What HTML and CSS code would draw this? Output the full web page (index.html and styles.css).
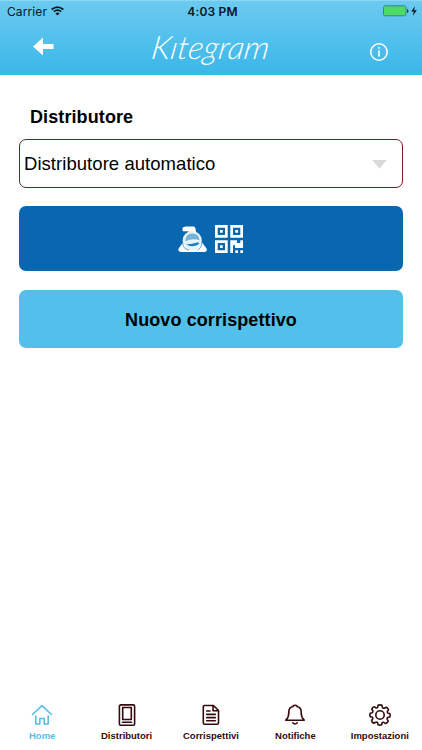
FILE: index.html
```html
<!DOCTYPE html>
<html lang="it">
<head>
    <meta charset="UTF-8">
    <meta name="viewport" content="width=device-width, initial-scale=1.0">
    <title>Kitegram</title>
    <link rel="stylesheet" href="styles.css">
</head>
<body>

    <header class="header">
        <div class="status-bar">
            <div class="carrier">
                <span>Carrier</span>
                <svg width="13" height="10" viewBox="0 0 13 10" fill="none" stroke="#06171f" stroke-width="1.7">
                    <path d="M.7 3.5Q6.5-1.3 12.3 3.5M2.8 5.7Q6.5 2.6 10.2 5.7"/>
                    <path d="M4.4 7.2Q6.5 5.6 8.6 7.2L6.5 9.5Z" fill="#06171f" stroke="none"/>
                </svg>
            </div>
            <div class="time">4:03 PM</div>
            <div class="battery">
                <svg width="36" height="12" viewBox="0 0 36 12">
                    <rect x="1.5" y=".8" width="22.5" height="10" rx="1.5" fill="#4cd964" stroke="#35878e"/>
                    <path d="M25 4q1.5.2 1.5 2t-1.5 2Z" fill="#17404f"/>
                    <path d="M32.9 1.2L29.2 6.6h2.6L30.9 10.8 34.8 5.3h-2.6Z" fill="#06171f"/>
                </svg>
            </div>
        </div>
        <div class="nav-bar">
            <svg class="back" width="21" height="19" viewBox="0 0 21 19">
                <path d="M0 9.5L10 .5V7H20.5V12H10V18.5Z" fill="#fff"/>
            </svg>
            <div class="logo">Kıtegram</div>
            <svg class="info" width="20" height="20" viewBox="0 0 20 20" fill="none" stroke="#fff">
                <circle cx="10" cy="10" r="8.2" stroke-width="1.5"/>
                <path d="M10 8.2V14.4M10 5V6.7" stroke-width="1.6"/>
            </svg>
        </div>
    </header>

    <main class="content">
        <div class="label">Distributore</div>
        <div class="select">
            <span>Distributore automatico</span>
            <svg width="15" height="9" viewBox="0 0 15 9"><path d="M.3 0H14.7L7.5 8.8Z" fill="#d9d9d9"/></svg>
        </div>
        <div class="btn btn-scan">
            <svg width="30" height="28" viewBox="0 0 30 28">
                <path d="M4.5 3Q5 1.5 8 1.5H15.5Q17 1.5 17.3 3L18.5 9H10L10.5 6.3H5Q4 6 4.5 3Z" fill="#fff"/>
                <path d="M5 17.5L.6 23.5Q-.5 27 4 27H25Q30 27 28.5 23.5L24 17.5Z" fill="#fff"/>
                <circle cx="14.2" cy="15.6" r="9.6" fill="#e4f2fa"/>
                <path d="M7.3 16.3Q7.6 8.7 14.2 8.5T21.6 15.3Q14.6 13 7.3 16.3Z" fill="#74b3dc"/>
                <path d="M8.2 19.5Q14.3 23.2 21.2 19L20.2 17.3Q14 19.2 8.2 19.5Z" fill="#227bbe"/>
                <path d="M4.8 18Q4.3 23.3 11 25.2M23.8 18Q24 22.6 19.5 25" fill="none" stroke="#4c98ce" stroke-width=".9"/>
            </svg>
            <svg class="qr" width="28" height="28" viewBox="0 0 28 28" fill="#fff">
                <path fill-rule="evenodd" d="M0 0H12.7V12.7H0ZM2.7 2.7V10H10V2.7ZM15.3 0H28V12.7H15.3ZM18 2.7V10H25.3V2.7ZM0 15.3H12.7V28H0ZM2.7 18V25.3H10V18Z"/>
                <path d="M5 5h2.7v2.7H5ZM20.3 5H23v2.7h-2.7ZM5 20.3h2.7V23H5ZM15.3 15.3H22V18h3.3v-2.7H28V23h-8v-2.7h-2V28h-2.7ZM20.3 25.3H23V28h-2.7ZM25.3 25.3H28V28h-2.7Z"/>
            </svg>
        </div>
        <div class="btn btn-new">Nuovo corrispettivo</div>
    </main>

    <nav class="tabs">
        <div class="tab active">
            <svg width="22" height="22" viewBox="0 0 22 22">
                <path d="M1.5 10.5L11 1.7L20.5 10.5M4.8 12V20H8.8V14.5H13.2V20H17.2V12"/>
            </svg>
            <span>Home</span>
        </div>
        <div class="tab">
            <svg width="22" height="22" viewBox="0 0 22 22">
                <rect x="3.4" y=".9" width="15.2" height="20.3" rx="1.3"/>
                <rect x="6.7" y="3.5" width="8.6" height="12"/>
                <path d="M6.5 18.3H15.5"/>
            </svg>
            <span>Distributori</span>
        </div>
        <div class="tab">
            <svg width="22" height="22" viewBox="0 0 22 22">
                <path d="M4.3 1.5H13.5L18.5 6.5V19Q18.5 20.3 17.3 20.3H4.3Q3.3 20.3 3.3 19V2.7Q3.3 1.5 4.3 1.5ZM13 1.8V6.8H18M6.7 7H10M6.7 10.4H15.3M6.7 13.6H15.3M6.7 16.8H15.3"/>
            </svg>
            <span>Corrispettivi</span>
        </div>
        <div class="tab">
            <svg width="22" height="22" viewBox="0 0 22 22">
                <path d="M1.8 16.2Q4.8 13.5 4.8 9V7.4Q5.1 3.3 9 2.5Q9 1.2 11 1.2T13 2.5Q16.9 3.3 17.2 7.4V9Q17.2 13.5 20.2 16.2ZM8.7 18.8Q11 21.2 13.3 18.8"/>
            </svg>
            <span>Notifiche</span>
        </div>
        <div class="tab">
            <svg width="22" height="22" viewBox="0 0 22 22">
                <path d="M9 1.3Q11 .4 13 1.3Q13 4.5 15.3 4.3L17.3 3.2Q19.3 4.2 19.5 6Q17.2 8.2 19.2 9.3L20.8 9.5Q21.5 11 20.8 13Q17.6 13 18.2 15.3L19.2 17.2Q18.3 19.2 16.2 19.5Q14 17.2 13 19L12.7 20.8Q11 21.5 9 20.8Q9 17.6 6.7 18.2L4.8 19.2Q2.8 18.3 2.6 16.3Q4.8 14 3 13L1.2 12.8Q.5 11 1.2 9.3Q4.4 9 3.8 6.8L2.8 5Q3.5 3 5.6 2.8Q8 5 8.8 3Z"/>
                <circle cx="11" cy="11" r="4.2"/>
            </svg>
            <span>Impostazioni</span>
        </div>
    </nav>

</body>
</html>
```
FILE: styles.css
```css
body {
    margin: 0;
    height: 750px;
    display: flex;
    flex-direction: column;
    background: #fff;
    color: #000;
    font-family: "Liberation Sans", Arial, sans-serif;
    overflow: hidden;
}
svg {
    display: block;
    flex: none;
}
.header {
    height: 75px;
    background: linear-gradient(#6bcaf0, #3ab7e8);
    border-top: 1px solid #8bd6f3;
    box-sizing: border-box;
}
.status-bar {
    display: grid;
    grid-template-columns: 1fr auto 1fr;
    align-items: center;
    height: 20px;
    padding: 0 4px 0 7px;
    font-family: Inter, sans-serif;
    font-size: 12px;
    color: #06171f;
}
.carrier {
    display: flex;
    align-items: center;
    gap: 4px;
    letter-spacing: 0.1px;
}
.time {
    font-weight: 600;
    letter-spacing: 0.2px;
}
.battery {
    justify-self: end;
}
.nav-bar {
    display: grid;
    grid-template-columns: 1fr auto 1fr;
    height: 54px;
    padding: 0 33px;
}
.back {
    margin-top: 16px;
}
.logo {
    font-family: "Lato Light", Lato, sans-serif;
    font-weight: 300;
    font-style: italic;
    font-size: 32px;
    line-height: 52px;
    letter-spacing: 0.2px;
    color: #fff;
    transform: skewX(-9deg);
}
.info {
    justify-self: end;
    margin-top: 21px;
}
.content {
    flex: 1;
    padding: 31px 19px 0;
}
.label {
    padding-left: 11px;
    font-size: 18px;
    font-weight: bold;
    line-height: 22px;
    letter-spacing: 0.1px;
}
.select {
    display: flex;
    align-items: center;
    justify-content: space-between;
    box-sizing: border-box;
    height: 49px;
    margin-top: 11px;
    padding: 1px 15px 0 4px;
    border: 1px solid #702027;
    border-radius: 7px;
    font-size: 18.5px;
    letter-spacing: 0.05px;
}
.btn {
    display: flex;
    align-items: center;
    justify-content: center;
    border-radius: 7px;
    font-size: 18px;
    font-weight: bold;
}
.btn-scan {
    box-sizing: border-box;
    height: 65px;
    margin-top: 18px;
    padding-right: 1px;
    gap: 7px;
    background: #0967af;
}
.btn-new {
    box-sizing: border-box;
    height: 58px;
    margin-top: 19px;
    padding-top: 2px;
    background: #51c1ec;
    letter-spacing: 0.1px;
}
.tabs {
    display: grid;
    grid-template-columns: repeat(5, 1fr);
    height: 46px;
}
.tab {
    display: flex;
    flex-direction: column;
    align-items: center;
    gap: 4px;
    color: #360b0e;
    font-size: 9.5px;
    font-weight: bold;
    line-height: 12px;
}
.tab svg {
    fill: none;
    stroke: currentColor;
    stroke-width: 1.6;
    stroke-linejoin: round;
    stroke-linecap: round;
}
.active {
    color: #56bfe6;
}
```
